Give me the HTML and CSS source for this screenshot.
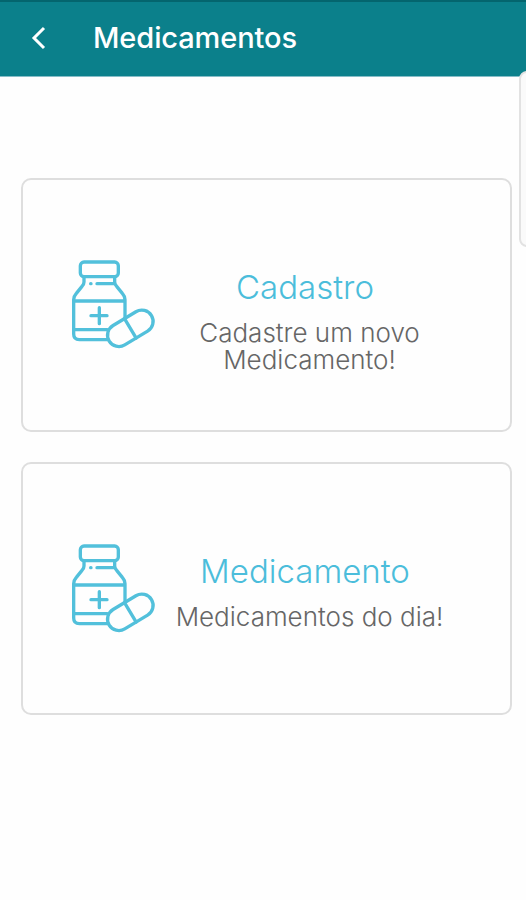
FILE: index.html
```
<!DOCTYPE html>
<html lang="pt-BR">
<head>
<meta charset="utf-8">
<title>Medicamentos</title>
<link rel="stylesheet" href="styles.css">
</head>
<body>
<svg class="defs" width="0" height="0" aria-hidden="true">
  <symbol id="medicine" viewBox="0 0 315 315">
    <rect x="61" y="36" width="114" height="44" rx="11"/>
    <path d="M72 80V96Q72 103 66 109L49 130Q41 139 41 149V252Q41 269 58 269H142M164 80V96Q164 103 170 109L187 130Q195 139 195 149V202M41 153H195M41 239H142M92 101H93M111 101H163M118 173V221M93 197H141"/>
    <g transform="rotate(-31 211 235)">
      <rect x="137" y="201" width="148" height="68" rx="34"/>
      <path d="M211 201V269"/>
    </g>
  </symbol>
</svg>
<header class="bar">
  <svg class="back" viewBox="0 0 20 28"><path d="M16 4L6 14L16 24"/></svg>
  <h1 class="bar-title">Medicamentos</h1>
</header>
<div class="edge-handle"></div>
<main class="cards">
  <section class="card">
    <svg class="icon"><use href="#medicine"/></svg>
    <div class="text">
      <h2 class="title">Cadastro</h2>
      <p class="sub">Cadastre um novo<br>Medicamento!</p>
    </div>
  </section>
  <section class="card">
    <svg class="icon"><use href="#medicine"/></svg>
    <div class="text">
      <h2 class="title">Medicamento</h2>
      <p class="sub">Medicamentos do dia!</p>
    </div>
  </section>
</main>
</body>
</html>
```
FILE: styles.css
```
* { box-sizing: border-box; }
body {
  margin: 0;
  height: 900px;
  overflow: hidden;
  position: relative;
  background: #fefefe;
  font-family: Inter, "Open Sans", sans-serif;
}
h1, h2, p { margin: 0; }
.defs { position: absolute; }
.bar {
  height: 77px;
  display: flex;
  align-items: center;
  padding: 0 0 2px 28px;
  background: #0b808b;
  border-top: 2px solid #04656e;
  border-bottom: 1px solid #86bdc8;
}
.back { width: 20px; height: 28px; fill: none; stroke: #fff; stroke-width: 3; }
.bar-title {
  margin-left: 45px;
  color: #fff;
  font-size: 29px;
  line-height: 36px;
  font-weight: 550;
  letter-spacing: -0.1px;
}
.edge-handle {
  position: absolute;
  left: 519px;
  top: 71px;
  width: 20px;
  height: 176px;
  border: 2px solid #e2e2e2;
  border-radius: 8px;
  background: #fafafa;
}
.cards {
  display: flex;
  flex-direction: column;
  gap: 30px;
  padding: 101px 14px 0 21px;
}
.card {
  height: 254px;
  display: flex;
  border: 2px solid #dedede;
  border-radius: 10px;
  background: #fefefe;
  height: 253.5px;
}
.icon {
  width: 105px;
  height: 105px;
  margin: 70px 0 0 36.5px;
  flex: none;
  fill: none;
  stroke: #52c0db;
  stroke-width: 10;
  stroke-linecap: round;
  stroke-linejoin: round;
}
.text { width: 290px; padding-top: 86px; text-align: center; white-space: nowrap; }
.title {
  margin-right: 9px;
  color: #4bbddb;
  font-size: 33px;
  line-height: 42px;
  font-weight: 320;
}
.sub {
  margin-top: 11px;
  color: #666;
  font-size: 26px;
  line-height: 27px;
  font-weight: 320;
}
```
